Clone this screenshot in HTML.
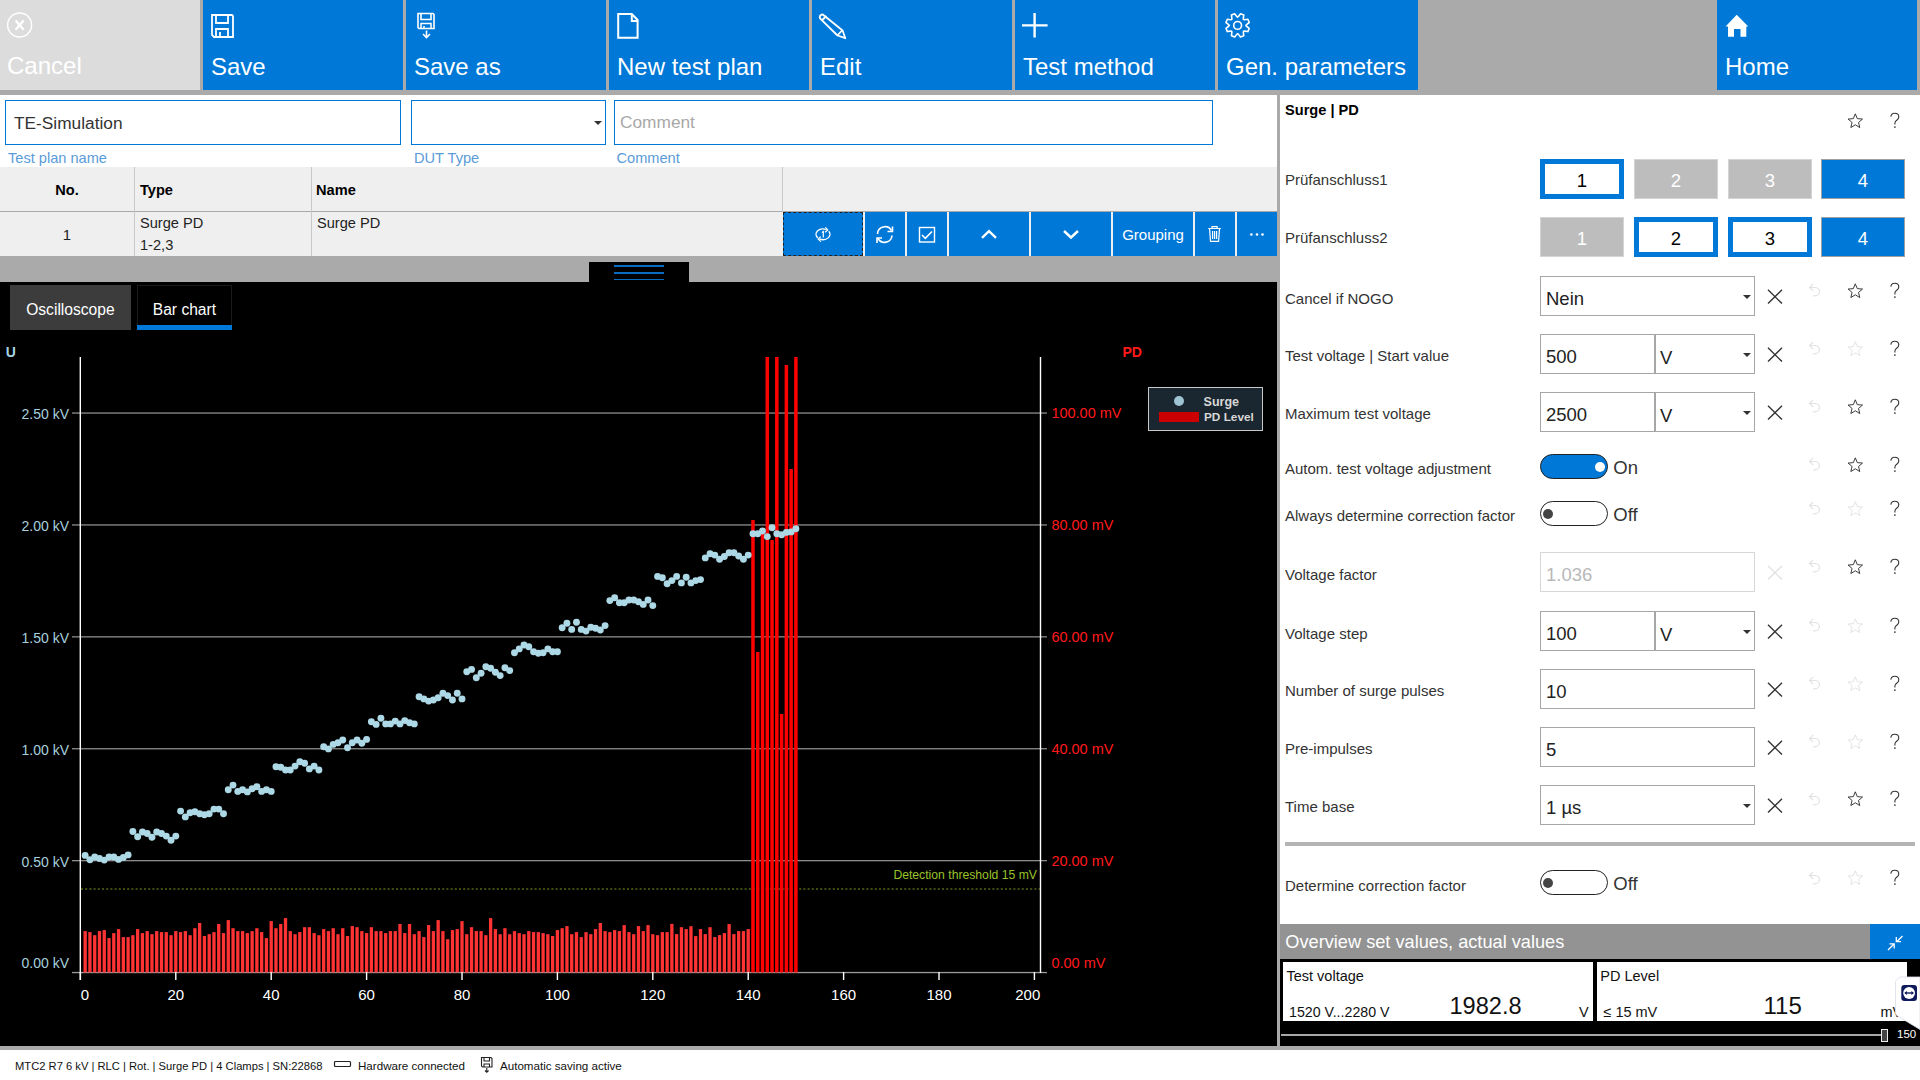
<!DOCTYPE html>
<html><head><meta charset="utf-8"><style>
html,body{margin:0;padding:0;width:1920px;height:1080px;overflow:hidden;background:#fff;font-family:"Liberation Sans",sans-serif;}
.a{position:absolute;}
.t{position:absolute;line-height:1;white-space:nowrap;}
svg text{font-family:"Liberation Sans",sans-serif;}
</style></head><body>
<div class="a" style="left:0px;top:0px;width:1920px;height:95px;background:#aaaaaa"></div>
<div class="a" style="left:0px;top:0px;width:200px;height:90px;background:#dcdcdc"></div>
<svg class="a" style="left:6px;top:12px;" width="28" height="28" viewBox="0 0 28 28"><circle cx="13.6" cy="13" r="12" fill="none" stroke="#fff" stroke-width="1.4"/><path d="M9.6 8.6 L17.6 17.8 M17.6 8.6 L9.6 17.8" stroke="#fff" stroke-width="2.3"/></svg>
<div class="t" style="left:7px;top:54.28px;font-size:24px;color:#fff;font-weight:normal;">Cancel</div>
<div class="a" style="left:203px;top:0px;width:200px;height:90px;background:#0078d7"></div>
<div class="t" style="left:211px;top:54.68px;font-size:24px;color:#fff;font-weight:normal;">Save</div>
<div class="a" style="left:406px;top:0px;width:200px;height:90px;background:#0078d7"></div>
<div class="t" style="left:414px;top:54.68px;font-size:24px;color:#fff;font-weight:normal;">Save as</div>
<div class="a" style="left:609px;top:0px;width:200px;height:90px;background:#0078d7"></div>
<div class="t" style="left:617px;top:54.68px;font-size:24px;color:#fff;font-weight:normal;">New test plan</div>
<div class="a" style="left:812px;top:0px;width:200px;height:90px;background:#0078d7"></div>
<div class="t" style="left:820px;top:54.68px;font-size:24px;color:#fff;font-weight:normal;">Edit</div>
<div class="a" style="left:1015px;top:0px;width:200px;height:90px;background:#0078d7"></div>
<div class="t" style="left:1023px;top:54.68px;font-size:24px;color:#fff;font-weight:normal;">Test method</div>
<div class="a" style="left:1218px;top:0px;width:200px;height:90px;background:#0078d7"></div>
<div class="t" style="left:1226px;top:54.68px;font-size:24px;color:#fff;font-weight:normal;">Gen. parameters</div>
<div class="a" style="left:1717px;top:0px;width:200px;height:90px;background:#0078d7"></div>
<div class="t" style="left:1725px;top:54.68px;font-size:24px;color:#fff;font-weight:normal;">Home</div>
<svg class="a" style="left:208px;top:10px;" width="30" height="30" viewBox="0 0 30 30"><path d="M4 5 H24 L25 6 V27 H6 L4 25 Z" fill="none" stroke="#fff" stroke-width="1.8"/><path d="M8 5 V13 H20 V5" fill="none" stroke="#fff" stroke-width="1.8"/><path d="M8 27 V19 H20 V27 M12 27 V22" fill="none" stroke="#fff" stroke-width="1.8"/></svg>
<svg class="a" style="left:412px;top:8px;" width="30" height="34" viewBox="0 0 30 34"><path d="M6 5.5 H21 L22 6.5 V20.5 H7 L6 19.5 Z" fill="none" stroke="#fff" stroke-width="1.6"/><path d="M9 5.5 V11.5 H19 V5.5" fill="none" stroke="#fff" stroke-width="1.6"/><path d="M9 20.5 V15.5 H19 V20.5 M12 20.5 V18" fill="none" stroke="#fff" stroke-width="1.5"/><path d="M14.5 22.5 V29 M11 26 L14.5 29.5 L18 26" fill="none" stroke="#fff" stroke-width="1.6"/></svg>
<svg class="a" style="left:612px;top:8px;" width="32" height="34" viewBox="0 0 32 34"><path d="M6.2 6 H19.8 L25.6 12 V29.8 H6.2 Z" fill="none" stroke="#fff" stroke-width="2"/><path d="M19.8 6 V13 H25.6" fill="none" stroke="#fff" stroke-width="2"/></svg>
<svg class="a" style="left:815px;top:7.5px;" width="36" height="36" viewBox="0 0 36 36"><path d="M9 7.5 C7 5.5 4 7 5 10.3 L22.5 27.5 L30.3 30.2 L27.6 22.5 Z" fill="none" stroke="#fff" stroke-width="1.8" stroke-linejoin="round"/><path d="M7.2 12 L11.5 8 M22.8 27 L27 22.5" fill="none" stroke="#fff" stroke-width="1.8"/></svg>
<svg class="a" style="left:1018px;top:8px;" width="34" height="34" viewBox="0 0 34 34"><path d="M4 17.4 H29.6 M16.6 5 V29.6" stroke="#fff" stroke-width="2.4"/></svg>
<svg class="a" style="left:1220px;top:8px;" width="36" height="36" viewBox="0 0 36 36"><path d="M18.46 8.44 L20.50 5.76 L23.78 7.11 L23.32 10.46 L23.47 11.53 L24.54 11.68 L27.89 11.22 L29.24 14.50 L26.56 16.54 L25.90 17.40 L26.56 18.26 L29.24 20.30 L27.89 23.58 L24.54 23.12 L23.47 23.27 L23.32 24.34 L23.78 27.69 L20.50 29.04 L18.46 26.36 L17.60 25.70 L16.74 26.36 L14.70 29.04 L11.42 27.69 L11.88 24.34 L11.73 23.27 L10.66 23.12 L7.31 23.58 L5.96 20.30 L8.64 18.26 L9.30 17.40 L8.64 16.54 L5.96 14.50 L7.31 11.22 L10.66 11.68 L11.73 11.53 L11.88 10.46 L11.42 7.11 L14.70 5.76 L16.74 8.44 L17.60 9.10 Z" fill="none" stroke="#fff" stroke-width="1.6" stroke-linejoin="round"/><circle cx="17.6" cy="17.4" r="3.9" fill="none" stroke="#fff" stroke-width="1.6"/></svg>
<svg class="a" style="left:1722px;top:10px;" width="32" height="32" viewBox="0 0 32 32"><path d="M3.6 16.5 L14.7 4.8 L26.3 16.5 L24.3 16.5 L24.3 26.8 L18.5 26.8 L18.5 19 L12 19 L12 26.8 L6 26.8 L6 16.5 Z" fill="#fff"/></svg>
<div class="a" style="left:0px;top:95px;width:1277px;height:72px;background:#fff"></div>
<div class="a" style="left:5px;top:100px;width:396px;height:45px;border:1px solid #0078d7;box-sizing:border-box;background:#fff"></div>
<div class="t" style="left:14px;top:115.35px;font-size:17.3px;color:#333;font-weight:normal;">TE-Simulation</div>
<div class="t" style="left:8px;top:150.64px;font-size:14.6px;color:#5a9bd8;font-weight:normal;">Test plan name</div>
<div class="a" style="left:411px;top:100px;width:195px;height:45px;border:1px solid #0078d7;box-sizing:border-box;background:#fff"></div>
<svg class="a" style="left:592px;top:119px;" width="12" height="8" viewBox="0 0 12 8"><path d="M2 2 H10 L6 6 Z" fill="#333"/></svg>
<div class="t" style="left:414px;top:150.64px;font-size:14.6px;color:#5a9bd8;font-weight:normal;">DUT Type</div>
<div class="a" style="left:614px;top:100px;width:599px;height:45px;border:1px solid #0078d7;box-sizing:border-box;background:#fff"></div>
<div class="t" style="left:620px;top:113.55px;font-size:17.3px;color:#a8a8a8;font-weight:normal;">Comment</div>
<div class="t" style="left:616.5px;top:150.64px;font-size:14.6px;color:#5a9bd8;font-weight:normal;">Comment</div>
<div class="a" style="left:0px;top:167px;width:1277px;height:89px;background:#efefef"></div>
<div class="a" style="left:0px;top:211px;width:1277px;height:1px;background:#a8a8a8"></div>
<div class="a" style="left:134px;top:167px;width:1px;height:89px;background:#c8c8c8"></div>
<div class="a" style="left:311px;top:167px;width:1px;height:89px;background:#c8c8c8"></div>
<div class="a" style="left:782px;top:167px;width:1px;height:45px;background:#c8c8c8"></div>
<div class="t" style="left:-233px;width:600px;text-align:center;top:182.64px;font-size:14.6px;color:#000;font-weight:bold;">No.</div>
<div class="t" style="left:140px;top:182.64px;font-size:14.6px;color:#000;font-weight:bold;">Type</div>
<div class="t" style="left:316px;top:182.64px;font-size:14.6px;color:#000;font-weight:bold;">Name</div>
<div class="t" style="left:-233px;width:600px;text-align:center;top:227.30px;font-size:15px;color:#222;font-weight:normal;">1</div>
<div class="t" style="left:140px;top:215.94px;font-size:14.6px;color:#222;font-weight:normal;">Surge PD</div>
<div class="t" style="left:140px;top:237.64px;font-size:14.6px;color:#222;font-weight:normal;">1-2,3</div>
<div class="t" style="left:317px;top:215.94px;font-size:14.6px;color:#222;font-weight:normal;">Surge PD</div>
<div class="a" style="left:783px;top:212px;width:80px;height:44px;background:#0078d7"></div>
<div class="a" style="left:865px;top:212px;width:40px;height:44px;background:#0078d7"></div>
<div class="a" style="left:907px;top:212px;width:40px;height:44px;background:#0078d7"></div>
<div class="a" style="left:949px;top:212px;width:80px;height:44px;background:#0078d7"></div>
<div class="a" style="left:1031px;top:212px;width:80px;height:44px;background:#0078d7"></div>
<div class="a" style="left:1113px;top:212px;width:80px;height:44px;background:#0078d7"></div>
<div class="a" style="left:1195px;top:212px;width:40px;height:44px;background:#0078d7"></div>
<div class="a" style="left:1237px;top:212px;width:40px;height:44px;background:#0078d7"></div>
<div class="a" style="left:783px;top:212px;width:80px;height:44px;border:1px dashed #222;box-sizing:border-box"></div>
<svg class="a" style="left:808px;top:222px;" width="30" height="26" viewBox="0 0 30 26"><path d="M10.05 16.05 A7 5.3 0 0 1 18.5 7.7 M20.73 9.26 A7 5.3 0 0 1 11.5 16.89" fill="none" stroke="#fff" stroke-width="1.25"/><path d="M17.4 5.3 L19.7 7.9 L17.1 10.3 M12.6 14.6 L10.3 17.1 L12.9 19.6" fill="none" stroke="#fff" stroke-width="1.25"/><path d="M13.9 10.6 L15.3 9.6 V15.6" fill="none" stroke="#fff" stroke-width="1.2"/></svg>
<svg class="a" style="left:870px;top:222px;" width="30" height="26" viewBox="0 0 30 26"><path d="M7.5 12 A7.5 7.5 0 0 1 21.5 8.5 M22 13.5 A7.5 7.5 0 0 1 8 16.5" fill="none" stroke="#fff" stroke-width="1.6"/><path d="M22.5 4.5 V9.5 H17.5 M7 21 V16 H12" fill="none" stroke="#fff" stroke-width="1.6"/></svg>
<svg class="a" style="left:912px;top:222px;" width="30" height="26" viewBox="0 0 30 26"><rect x="7.5" y="5.5" width="15" height="14.5" fill="none" stroke="#fff" stroke-width="1.4"/><path d="M10 13 L13.3 16.3 L20 9.5" fill="none" stroke="#fff" stroke-width="1.6"/></svg>
<svg class="a" style="left:974px;top:222px;" width="30" height="26" viewBox="0 0 30 26"><path d="M8 15.8 L15 9.2 L22 15.8" fill="none" stroke="#fff" stroke-width="2.4"/></svg>
<svg class="a" style="left:1056px;top:222px;" width="30" height="26" viewBox="0 0 30 26"><path d="M8 9 L15 15.5 L22 9" fill="none" stroke="#fff" stroke-width="2.4"/></svg>
<div class="t" style="left:853px;width:600px;text-align:center;top:227.30px;font-size:15px;color:#fff;font-weight:normal;">Grouping</div>
<svg class="a" style="left:1200px;top:222px;" width="30" height="26" viewBox="0 0 30 26"><path d="M8.3 6.5 H20.9 M12 6.5 V4.6 H17.2 V6.5 M9.6 6.6 L10.5 19.3 H18.6 L19.5 6.6 M12.6 9 V17 M14.6 9 V17 M16.6 9 V17" fill="none" stroke="#fff" stroke-width="1.2"/></svg>
<svg class="a" style="left:1240px;top:222px;" width="30" height="26" viewBox="0 0 30 26"><circle cx="11.4" cy="12.5" r="1.3" fill="#fff"/><circle cx="17" cy="12.5" r="1.3" fill="#fff"/><circle cx="22.5" cy="12.5" r="1.3" fill="#fff"/></svg>
<div class="a" style="left:0px;top:256px;width:1277px;height:26px;background:#aaaaaa"></div>
<div class="a" style="left:589px;top:262px;width:100px;height:20px;background:#000"></div>
<div class="a" style="left:614px;top:265px;width:50px;height:1.5px;background:#0a6cc0"></div>
<div class="a" style="left:614px;top:272px;width:50px;height:1.5px;background:#0a6cc0"></div>
<div class="a" style="left:614px;top:278.5px;width:50px;height:1.5px;background:#0a6cc0"></div>
<div class="a" style="left:1277px;top:95px;width:3px;height:955px;background:#aaaaaa"></div>
<div class="a" style="left:0px;top:1046px;width:1920px;height:4px;background:#aaaaaa"></div>
<div class="a" style="left:0px;top:1050px;width:1920px;height:30px;background:#fff"></div>
<div class="t" style="left:15px;top:1060.52px;font-size:11.2px;color:#111;font-weight:normal;">MTC2 R7 6 kV | RLC | Rot. | Surge PD | 4 Clamps | SN:22868</div>
<svg class="a" style="left:333px;top:1059px;" width="20" height="12" viewBox="0 0 20 12"><rect x="1.5" y="2.5" width="16" height="5" rx="1" fill="none" stroke="#222" stroke-width="1.2"/></svg>
<div class="t" style="left:358px;top:1060.18px;font-size:11.6px;color:#111;font-weight:normal;">Hardware connected</div>
<svg class="a" style="left:479px;top:1055px;" width="16" height="20" viewBox="0 0 16 20"><path d="M2.5 2.5 H12 L13 3.5 V12 H3.5 L2.5 11 Z" fill="none" stroke="#222" stroke-width="1.1"/><path d="M5 2.5 V6 H10.5 V2.5 M5 12 V9 H10.5 V12 M7.8 13 V17 M6 15.5 L7.8 17.3 L9.6 15.5" fill="none" stroke="#222" stroke-width="1.1"/></svg>
<div class="t" style="left:500px;top:1060.18px;font-size:11.6px;color:#111;font-weight:normal;">Automatic saving active</div>
<div class="a" style="left:1280px;top:95px;width:640px;height:829px;background:#fff"></div>
<div class="t" style="left:1285px;top:103.14px;font-size:14.6px;color:#000;font-weight:bold;">Surge | PD</div>
<svg class="a" style="left:1848px;top:112.5px;" width="16" height="17" viewBox="0 0 16 17"><path d="M7.30 0.80 L9.30 5.65 L14.53 6.05 L10.53 9.45 L11.77 14.55 L7.30 11.80 L2.83 14.55 L4.07 9.45 L0.07 6.05 L5.30 5.65 Z" fill="none" stroke="#333" stroke-width="0.95" stroke-linejoin="miter"/></svg>
<svg class="a" style="left:1888.5px;top:112px;" width="12" height="17" viewBox="0 0 12 17"><path d="M1.8 4.6 C2.1 2.3 3.8 1.2 5.6 1.2 C7.9 1.2 9.8 2.7 9.8 4.9 C9.8 7.2 7.8 8.1 6.7 9.1 C6.1 9.7 5.9 10.3 5.9 11.4 V12.6" fill="none" stroke="#333" stroke-width="1.1"/><circle cx="5.9" cy="15.1" r="0.85" fill="#333"/></svg>
<div class="t" style="left:1285px;top:171.80px;font-size:15px;color:#333;font-weight:normal;">Prüfanschluss1</div>
<div class="t" style="left:1285px;top:230.10px;font-size:15px;color:#333;font-weight:normal;">Prüfanschluss2</div>
<div class="a" style="left:1540px;top:159px;width:84px;height:40px;background:#fff;border:5px solid #0078d7;box-sizing:border-box"></div>
<div class="t" style="left:1282.0px;width:600px;text-align:center;top:172.04px;font-size:18.5px;color:#000;font-weight:normal;">1</div>
<div class="a" style="left:1634px;top:159px;width:84px;height:40px;background:#bdbdbd;border:1px solid #d4d4d4;box-sizing:border-box"></div>
<div class="t" style="left:1376.0px;width:600px;text-align:center;top:172.04px;font-size:18.5px;color:#fff;font-weight:normal;">2</div>
<div class="a" style="left:1728px;top:159px;width:84px;height:40px;background:#bdbdbd;border:1px solid #d4d4d4;box-sizing:border-box"></div>
<div class="t" style="left:1470.0px;width:600px;text-align:center;top:172.04px;font-size:18.5px;color:#fff;font-weight:normal;">3</div>
<div class="a" style="left:1821px;top:159px;width:84px;height:40px;background:#0078d7;border:1px solid #a0a0a0;box-sizing:border-box"></div>
<div class="t" style="left:1563.0px;width:600px;text-align:center;top:172.04px;font-size:18.5px;color:#fff;font-weight:normal;">4</div>
<div class="a" style="left:1540px;top:217px;width:84px;height:40px;background:#bdbdbd;border:1px solid #d4d4d4;box-sizing:border-box"></div>
<div class="t" style="left:1282.0px;width:600px;text-align:center;top:230.04px;font-size:18.5px;color:#fff;font-weight:normal;">1</div>
<div class="a" style="left:1634px;top:217px;width:84px;height:40px;background:#fff;border:5px solid #0078d7;box-sizing:border-box"></div>
<div class="t" style="left:1376.0px;width:600px;text-align:center;top:230.04px;font-size:18.5px;color:#000;font-weight:normal;">2</div>
<div class="a" style="left:1728px;top:217px;width:84px;height:40px;background:#fff;border:5px solid #0078d7;box-sizing:border-box"></div>
<div class="t" style="left:1470.0px;width:600px;text-align:center;top:230.04px;font-size:18.5px;color:#000;font-weight:normal;">3</div>
<div class="a" style="left:1821px;top:217px;width:84px;height:40px;background:#0078d7;border:1px solid #a0a0a0;box-sizing:border-box"></div>
<div class="t" style="left:1563.0px;width:600px;text-align:center;top:230.04px;font-size:18.5px;color:#fff;font-weight:normal;">4</div>
<div class="t" style="left:1285px;top:290.60px;font-size:15px;color:#333;font-weight:normal;">Cancel if NOGO</div>
<div class="a" style="left:1540px;top:276px;width:215px;height:40px;background:#fff;border:1px solid #a6a6a6;box-sizing:border-box"></div>
<div class="t" style="left:1546px;top:289.84px;font-size:18.5px;color:#222;font-weight:normal;">Nein</div>
<svg class="a" style="left:1742px;top:294px;" width="10" height="6" viewBox="0 0 10 6"><path d="M1 1 H9 L5 5 Z" fill="#333"/></svg>
<svg class="a" style="left:1767px;top:289px;" width="16" height="16" viewBox="0 0 16 16"><path d="M1 0.8 L15 14.6 M15 0.8 L1 14.6" stroke="#333" stroke-width="1.4"/></svg>
<svg class="a" style="left:1808px;top:282.3px;" width="14" height="15" viewBox="0 0 14 15"><path d="M1.8 5.5 H6.8 A4.6 4.2 0 0 1 6.8 13.9 H5.2" fill="none" stroke="#e2e2e2" stroke-width="1.2"/><path d="M5.2 1.9 L1.6 5.5 L5.2 9.1" fill="none" stroke="#e2e2e2" stroke-width="1.2"/></svg>
<svg class="a" style="left:1847.5px;top:282.8px;" width="16" height="17" viewBox="0 0 16 17"><path d="M7.30 0.80 L9.30 5.65 L14.53 6.05 L10.53 9.45 L11.77 14.55 L7.30 11.80 L2.83 14.55 L4.07 9.45 L0.07 6.05 L5.30 5.65 Z" fill="none" stroke="#333" stroke-width="0.95" stroke-linejoin="miter"/></svg>
<svg class="a" style="left:1888.5px;top:282.0px;" width="12" height="17" viewBox="0 0 12 17"><path d="M1.8 4.6 C2.1 2.3 3.8 1.2 5.6 1.2 C7.9 1.2 9.8 2.7 9.8 4.9 C9.8 7.2 7.8 8.1 6.7 9.1 C6.1 9.7 5.9 10.3 5.9 11.4 V12.6" fill="none" stroke="#333" stroke-width="1.1"/><circle cx="5.9" cy="15.1" r="0.85" fill="#333"/></svg>
<div class="t" style="left:1285px;top:348.30px;font-size:15px;color:#333;font-weight:normal;">Test voltage | Start value</div>
<div class="a" style="left:1540px;top:334px;width:215px;height:40px;background:#fff;border:1px solid #a6a6a6;box-sizing:border-box"></div>
<div class="t" style="left:1546px;top:347.84px;font-size:18.5px;color:#222;font-weight:normal;">500</div>
<div class="a" style="left:1654px;top:334px;width:2px;height:40px;background:#a6a6a6"></div>
<div class="t" style="left:1660px;top:349.34px;font-size:18.5px;color:#222;font-weight:normal;">V</div>
<svg class="a" style="left:1742px;top:352px;" width="10" height="6" viewBox="0 0 10 6"><path d="M1 1 H9 L5 5 Z" fill="#333"/></svg>
<svg class="a" style="left:1767px;top:347px;" width="16" height="16" viewBox="0 0 16 16"><path d="M1 0.8 L15 14.6 M15 0.8 L1 14.6" stroke="#333" stroke-width="1.4"/></svg>
<svg class="a" style="left:1808px;top:340px;" width="14" height="15" viewBox="0 0 14 15"><path d="M1.8 5.5 H6.8 A4.6 4.2 0 0 1 6.8 13.9 H5.2" fill="none" stroke="#e2e2e2" stroke-width="1.2"/><path d="M5.2 1.9 L1.6 5.5 L5.2 9.1" fill="none" stroke="#e2e2e2" stroke-width="1.2"/></svg>
<svg class="a" style="left:1847.5px;top:340.5px;" width="16" height="17" viewBox="0 0 16 17"><path d="M7.30 0.80 L9.30 5.65 L14.53 6.05 L10.53 9.45 L11.77 14.55 L7.30 11.80 L2.83 14.55 L4.07 9.45 L0.07 6.05 L5.30 5.65 Z" fill="none" stroke="#e2e2e2" stroke-width="0.95" stroke-linejoin="miter"/></svg>
<svg class="a" style="left:1888.5px;top:339.7px;" width="12" height="17" viewBox="0 0 12 17"><path d="M1.8 4.6 C2.1 2.3 3.8 1.2 5.6 1.2 C7.9 1.2 9.8 2.7 9.8 4.9 C9.8 7.2 7.8 8.1 6.7 9.1 C6.1 9.7 5.9 10.3 5.9 11.4 V12.6" fill="none" stroke="#333" stroke-width="1.1"/><circle cx="5.9" cy="15.1" r="0.85" fill="#333"/></svg>
<div class="t" style="left:1285px;top:406.30px;font-size:15px;color:#333;font-weight:normal;">Maximum test voltage</div>
<div class="a" style="left:1540px;top:392px;width:215px;height:40px;background:#fff;border:1px solid #a6a6a6;box-sizing:border-box"></div>
<div class="t" style="left:1546px;top:405.84px;font-size:18.5px;color:#222;font-weight:normal;">2500</div>
<div class="a" style="left:1654px;top:392px;width:2px;height:40px;background:#a6a6a6"></div>
<div class="t" style="left:1660px;top:407.34px;font-size:18.5px;color:#222;font-weight:normal;">V</div>
<svg class="a" style="left:1742px;top:410px;" width="10" height="6" viewBox="0 0 10 6"><path d="M1 1 H9 L5 5 Z" fill="#333"/></svg>
<svg class="a" style="left:1767px;top:405px;" width="16" height="16" viewBox="0 0 16 16"><path d="M1 0.8 L15 14.6 M15 0.8 L1 14.6" stroke="#333" stroke-width="1.4"/></svg>
<svg class="a" style="left:1808px;top:398px;" width="14" height="15" viewBox="0 0 14 15"><path d="M1.8 5.5 H6.8 A4.6 4.2 0 0 1 6.8 13.9 H5.2" fill="none" stroke="#e2e2e2" stroke-width="1.2"/><path d="M5.2 1.9 L1.6 5.5 L5.2 9.1" fill="none" stroke="#e2e2e2" stroke-width="1.2"/></svg>
<svg class="a" style="left:1847.5px;top:398.5px;" width="16" height="17" viewBox="0 0 16 17"><path d="M7.30 0.80 L9.30 5.65 L14.53 6.05 L10.53 9.45 L11.77 14.55 L7.30 11.80 L2.83 14.55 L4.07 9.45 L0.07 6.05 L5.30 5.65 Z" fill="none" stroke="#333" stroke-width="0.95" stroke-linejoin="miter"/></svg>
<svg class="a" style="left:1888.5px;top:397.7px;" width="12" height="17" viewBox="0 0 12 17"><path d="M1.8 4.6 C2.1 2.3 3.8 1.2 5.6 1.2 C7.9 1.2 9.8 2.7 9.8 4.9 C9.8 7.2 7.8 8.1 6.7 9.1 C6.1 9.7 5.9 10.3 5.9 11.4 V12.6" fill="none" stroke="#333" stroke-width="1.1"/><circle cx="5.9" cy="15.1" r="0.85" fill="#333"/></svg>
<div class="t" style="left:1285px;top:461.30px;font-size:15px;color:#333;font-weight:normal;">Autom. test voltage adjustment</div>
<div class="a" style="left:1540px;top:454px;width:68px;height:25px;background:#0078d7;border:1.5px solid #222;border-radius:13px;box-sizing:border-box"></div>
<div class="a" style="left:1595px;top:461.5px;width:10px;height:10px;background:#fff;border-radius:50%"></div>
<div class="t" style="left:1613.3px;top:458.84px;font-size:18.5px;color:#333;font-weight:normal;">On</div>
<svg class="a" style="left:1808px;top:456px;" width="14" height="15" viewBox="0 0 14 15"><path d="M1.8 5.5 H6.8 A4.6 4.2 0 0 1 6.8 13.9 H5.2" fill="none" stroke="#e2e2e2" stroke-width="1.2"/><path d="M5.2 1.9 L1.6 5.5 L5.2 9.1" fill="none" stroke="#e2e2e2" stroke-width="1.2"/></svg>
<svg class="a" style="left:1847.5px;top:456.5px;" width="16" height="17" viewBox="0 0 16 17"><path d="M7.30 0.80 L9.30 5.65 L14.53 6.05 L10.53 9.45 L11.77 14.55 L7.30 11.80 L2.83 14.55 L4.07 9.45 L0.07 6.05 L5.30 5.65 Z" fill="none" stroke="#333" stroke-width="0.95" stroke-linejoin="miter"/></svg>
<svg class="a" style="left:1888.5px;top:455.7px;" width="12" height="17" viewBox="0 0 12 17"><path d="M1.8 4.6 C2.1 2.3 3.8 1.2 5.6 1.2 C7.9 1.2 9.8 2.7 9.8 4.9 C9.8 7.2 7.8 8.1 6.7 9.1 C6.1 9.7 5.9 10.3 5.9 11.4 V12.6" fill="none" stroke="#333" stroke-width="1.1"/><circle cx="5.9" cy="15.1" r="0.85" fill="#333"/></svg>
<div class="t" style="left:1285px;top:508.30px;font-size:15px;color:#333;font-weight:normal;">Always determine correction factor</div>
<div class="a" style="left:1540px;top:501px;width:68px;height:25px;background:#fff;border:1.5px solid #222;border-radius:13px;box-sizing:border-box"></div>
<div class="a" style="left:1543px;top:508.5px;width:10px;height:10px;background:#444;border-radius:50%"></div>
<div class="t" style="left:1613.3px;top:505.84px;font-size:18.5px;color:#333;font-weight:normal;">Off</div>
<svg class="a" style="left:1808px;top:500px;" width="14" height="15" viewBox="0 0 14 15"><path d="M1.8 5.5 H6.8 A4.6 4.2 0 0 1 6.8 13.9 H5.2" fill="none" stroke="#e2e2e2" stroke-width="1.2"/><path d="M5.2 1.9 L1.6 5.5 L5.2 9.1" fill="none" stroke="#e2e2e2" stroke-width="1.2"/></svg>
<svg class="a" style="left:1847.5px;top:500.5px;" width="16" height="17" viewBox="0 0 16 17"><path d="M7.30 0.80 L9.30 5.65 L14.53 6.05 L10.53 9.45 L11.77 14.55 L7.30 11.80 L2.83 14.55 L4.07 9.45 L0.07 6.05 L5.30 5.65 Z" fill="none" stroke="#e2e2e2" stroke-width="0.95" stroke-linejoin="miter"/></svg>
<svg class="a" style="left:1888.5px;top:499.70000000000005px;" width="12" height="17" viewBox="0 0 12 17"><path d="M1.8 4.6 C2.1 2.3 3.8 1.2 5.6 1.2 C7.9 1.2 9.8 2.7 9.8 4.9 C9.8 7.2 7.8 8.1 6.7 9.1 C6.1 9.7 5.9 10.3 5.9 11.4 V12.6" fill="none" stroke="#333" stroke-width="1.1"/><circle cx="5.9" cy="15.1" r="0.85" fill="#333"/></svg>
<div class="t" style="left:1285px;top:566.60px;font-size:15px;color:#333;font-weight:normal;">Voltage factor</div>
<div class="a" style="left:1540px;top:552px;width:215px;height:40px;background:#fff;border:1px solid #d6d6d6;box-sizing:border-box"></div>
<div class="t" style="left:1546px;top:565.84px;font-size:18.5px;color:#b8b8b8;font-weight:normal;">1.036</div>
<svg class="a" style="left:1767px;top:565px;" width="16" height="16" viewBox="0 0 16 16"><path d="M1 0.8 L15 14.6 M15 0.8 L1 14.6" stroke="#e2e2e2" stroke-width="1.4"/></svg>
<svg class="a" style="left:1808px;top:558.3px;" width="14" height="15" viewBox="0 0 14 15"><path d="M1.8 5.5 H6.8 A4.6 4.2 0 0 1 6.8 13.9 H5.2" fill="none" stroke="#e2e2e2" stroke-width="1.2"/><path d="M5.2 1.9 L1.6 5.5 L5.2 9.1" fill="none" stroke="#e2e2e2" stroke-width="1.2"/></svg>
<svg class="a" style="left:1847.5px;top:558.8px;" width="16" height="17" viewBox="0 0 16 17"><path d="M7.30 0.80 L9.30 5.65 L14.53 6.05 L10.53 9.45 L11.77 14.55 L7.30 11.80 L2.83 14.55 L4.07 9.45 L0.07 6.05 L5.30 5.65 Z" fill="none" stroke="#333" stroke-width="0.95" stroke-linejoin="miter"/></svg>
<svg class="a" style="left:1888.5px;top:558.0px;" width="12" height="17" viewBox="0 0 12 17"><path d="M1.8 4.6 C2.1 2.3 3.8 1.2 5.6 1.2 C7.9 1.2 9.8 2.7 9.8 4.9 C9.8 7.2 7.8 8.1 6.7 9.1 C6.1 9.7 5.9 10.3 5.9 11.4 V12.6" fill="none" stroke="#333" stroke-width="1.1"/><circle cx="5.9" cy="15.1" r="0.85" fill="#333"/></svg>
<div class="t" style="left:1285px;top:625.60px;font-size:15px;color:#333;font-weight:normal;">Voltage step</div>
<div class="a" style="left:1540px;top:611px;width:215px;height:40px;background:#fff;border:1px solid #a6a6a6;box-sizing:border-box"></div>
<div class="t" style="left:1546px;top:624.84px;font-size:18.5px;color:#222;font-weight:normal;">100</div>
<div class="a" style="left:1654px;top:611px;width:2px;height:40px;background:#a6a6a6"></div>
<div class="t" style="left:1660px;top:626.34px;font-size:18.5px;color:#222;font-weight:normal;">V</div>
<svg class="a" style="left:1742px;top:629px;" width="10" height="6" viewBox="0 0 10 6"><path d="M1 1 H9 L5 5 Z" fill="#333"/></svg>
<svg class="a" style="left:1767px;top:624px;" width="16" height="16" viewBox="0 0 16 16"><path d="M1 0.8 L15 14.6 M15 0.8 L1 14.6" stroke="#333" stroke-width="1.4"/></svg>
<svg class="a" style="left:1808px;top:617.3px;" width="14" height="15" viewBox="0 0 14 15"><path d="M1.8 5.5 H6.8 A4.6 4.2 0 0 1 6.8 13.9 H5.2" fill="none" stroke="#e2e2e2" stroke-width="1.2"/><path d="M5.2 1.9 L1.6 5.5 L5.2 9.1" fill="none" stroke="#e2e2e2" stroke-width="1.2"/></svg>
<svg class="a" style="left:1847.5px;top:617.8px;" width="16" height="17" viewBox="0 0 16 17"><path d="M7.30 0.80 L9.30 5.65 L14.53 6.05 L10.53 9.45 L11.77 14.55 L7.30 11.80 L2.83 14.55 L4.07 9.45 L0.07 6.05 L5.30 5.65 Z" fill="none" stroke="#e2e2e2" stroke-width="0.95" stroke-linejoin="miter"/></svg>
<svg class="a" style="left:1888.5px;top:617.0px;" width="12" height="17" viewBox="0 0 12 17"><path d="M1.8 4.6 C2.1 2.3 3.8 1.2 5.6 1.2 C7.9 1.2 9.8 2.7 9.8 4.9 C9.8 7.2 7.8 8.1 6.7 9.1 C6.1 9.7 5.9 10.3 5.9 11.4 V12.6" fill="none" stroke="#333" stroke-width="1.1"/><circle cx="5.9" cy="15.1" r="0.85" fill="#333"/></svg>
<div class="t" style="left:1285px;top:683.30px;font-size:15px;color:#333;font-weight:normal;">Number of surge pulses</div>
<div class="a" style="left:1540px;top:669px;width:215px;height:40px;background:#fff;border:1px solid #a6a6a6;box-sizing:border-box"></div>
<div class="t" style="left:1546px;top:682.84px;font-size:18.5px;color:#222;font-weight:normal;">10</div>
<svg class="a" style="left:1767px;top:682px;" width="16" height="16" viewBox="0 0 16 16"><path d="M1 0.8 L15 14.6 M15 0.8 L1 14.6" stroke="#333" stroke-width="1.4"/></svg>
<svg class="a" style="left:1808px;top:675px;" width="14" height="15" viewBox="0 0 14 15"><path d="M1.8 5.5 H6.8 A4.6 4.2 0 0 1 6.8 13.9 H5.2" fill="none" stroke="#e2e2e2" stroke-width="1.2"/><path d="M5.2 1.9 L1.6 5.5 L5.2 9.1" fill="none" stroke="#e2e2e2" stroke-width="1.2"/></svg>
<svg class="a" style="left:1847.5px;top:675.5px;" width="16" height="17" viewBox="0 0 16 17"><path d="M7.30 0.80 L9.30 5.65 L14.53 6.05 L10.53 9.45 L11.77 14.55 L7.30 11.80 L2.83 14.55 L4.07 9.45 L0.07 6.05 L5.30 5.65 Z" fill="none" stroke="#e2e2e2" stroke-width="0.95" stroke-linejoin="miter"/></svg>
<svg class="a" style="left:1888.5px;top:674.7px;" width="12" height="17" viewBox="0 0 12 17"><path d="M1.8 4.6 C2.1 2.3 3.8 1.2 5.6 1.2 C7.9 1.2 9.8 2.7 9.8 4.9 C9.8 7.2 7.8 8.1 6.7 9.1 C6.1 9.7 5.9 10.3 5.9 11.4 V12.6" fill="none" stroke="#333" stroke-width="1.1"/><circle cx="5.9" cy="15.1" r="0.85" fill="#333"/></svg>
<div class="t" style="left:1285px;top:741.30px;font-size:15px;color:#333;font-weight:normal;">Pre-impulses</div>
<div class="a" style="left:1540px;top:727px;width:215px;height:40px;background:#fff;border:1px solid #a6a6a6;box-sizing:border-box"></div>
<div class="t" style="left:1546px;top:740.84px;font-size:18.5px;color:#222;font-weight:normal;">5</div>
<svg class="a" style="left:1767px;top:740px;" width="16" height="16" viewBox="0 0 16 16"><path d="M1 0.8 L15 14.6 M15 0.8 L1 14.6" stroke="#333" stroke-width="1.4"/></svg>
<svg class="a" style="left:1808px;top:733px;" width="14" height="15" viewBox="0 0 14 15"><path d="M1.8 5.5 H6.8 A4.6 4.2 0 0 1 6.8 13.9 H5.2" fill="none" stroke="#e2e2e2" stroke-width="1.2"/><path d="M5.2 1.9 L1.6 5.5 L5.2 9.1" fill="none" stroke="#e2e2e2" stroke-width="1.2"/></svg>
<svg class="a" style="left:1847.5px;top:733.5px;" width="16" height="17" viewBox="0 0 16 17"><path d="M7.30 0.80 L9.30 5.65 L14.53 6.05 L10.53 9.45 L11.77 14.55 L7.30 11.80 L2.83 14.55 L4.07 9.45 L0.07 6.05 L5.30 5.65 Z" fill="none" stroke="#e2e2e2" stroke-width="0.95" stroke-linejoin="miter"/></svg>
<svg class="a" style="left:1888.5px;top:732.7px;" width="12" height="17" viewBox="0 0 12 17"><path d="M1.8 4.6 C2.1 2.3 3.8 1.2 5.6 1.2 C7.9 1.2 9.8 2.7 9.8 4.9 C9.8 7.2 7.8 8.1 6.7 9.1 C6.1 9.7 5.9 10.3 5.9 11.4 V12.6" fill="none" stroke="#333" stroke-width="1.1"/><circle cx="5.9" cy="15.1" r="0.85" fill="#333"/></svg>
<div class="t" style="left:1285px;top:799.00px;font-size:15px;color:#333;font-weight:normal;">Time base</div>
<div class="a" style="left:1540px;top:785px;width:215px;height:40px;background:#fff;border:1px solid #a6a6a6;box-sizing:border-box"></div>
<div class="t" style="left:1546px;top:798.84px;font-size:18.5px;color:#222;font-weight:normal;">1 µs</div>
<svg class="a" style="left:1742px;top:803px;" width="10" height="6" viewBox="0 0 10 6"><path d="M1 1 H9 L5 5 Z" fill="#333"/></svg>
<svg class="a" style="left:1767px;top:798px;" width="16" height="16" viewBox="0 0 16 16"><path d="M1 0.8 L15 14.6 M15 0.8 L1 14.6" stroke="#333" stroke-width="1.4"/></svg>
<svg class="a" style="left:1808px;top:790.7px;" width="14" height="15" viewBox="0 0 14 15"><path d="M1.8 5.5 H6.8 A4.6 4.2 0 0 1 6.8 13.9 H5.2" fill="none" stroke="#e2e2e2" stroke-width="1.2"/><path d="M5.2 1.9 L1.6 5.5 L5.2 9.1" fill="none" stroke="#e2e2e2" stroke-width="1.2"/></svg>
<svg class="a" style="left:1847.5px;top:791.2px;" width="16" height="17" viewBox="0 0 16 17"><path d="M7.30 0.80 L9.30 5.65 L14.53 6.05 L10.53 9.45 L11.77 14.55 L7.30 11.80 L2.83 14.55 L4.07 9.45 L0.07 6.05 L5.30 5.65 Z" fill="none" stroke="#333" stroke-width="0.95" stroke-linejoin="miter"/></svg>
<svg class="a" style="left:1888.5px;top:790.4000000000001px;" width="12" height="17" viewBox="0 0 12 17"><path d="M1.8 4.6 C2.1 2.3 3.8 1.2 5.6 1.2 C7.9 1.2 9.8 2.7 9.8 4.9 C9.8 7.2 7.8 8.1 6.7 9.1 C6.1 9.7 5.9 10.3 5.9 11.4 V12.6" fill="none" stroke="#333" stroke-width="1.1"/><circle cx="5.9" cy="15.1" r="0.85" fill="#333"/></svg>
<div class="t" style="left:1285px;top:878.00px;font-size:15px;color:#333;font-weight:normal;">Determine correction factor</div>
<div class="a" style="left:1540px;top:870px;width:68px;height:25px;background:#fff;border:1.5px solid #222;border-radius:13px;box-sizing:border-box"></div>
<div class="a" style="left:1543px;top:877.5px;width:10px;height:10px;background:#444;border-radius:50%"></div>
<div class="t" style="left:1613.3px;top:874.84px;font-size:18.5px;color:#333;font-weight:normal;">Off</div>
<svg class="a" style="left:1808px;top:869.7px;" width="14" height="15" viewBox="0 0 14 15"><path d="M1.8 5.5 H6.8 A4.6 4.2 0 0 1 6.8 13.9 H5.2" fill="none" stroke="#e2e2e2" stroke-width="1.2"/><path d="M5.2 1.9 L1.6 5.5 L5.2 9.1" fill="none" stroke="#e2e2e2" stroke-width="1.2"/></svg>
<svg class="a" style="left:1847.5px;top:870.2px;" width="16" height="17" viewBox="0 0 16 17"><path d="M7.30 0.80 L9.30 5.65 L14.53 6.05 L10.53 9.45 L11.77 14.55 L7.30 11.80 L2.83 14.55 L4.07 9.45 L0.07 6.05 L5.30 5.65 Z" fill="none" stroke="#e2e2e2" stroke-width="0.95" stroke-linejoin="miter"/></svg>
<svg class="a" style="left:1888.5px;top:869.4000000000001px;" width="12" height="17" viewBox="0 0 12 17"><path d="M1.8 4.6 C2.1 2.3 3.8 1.2 5.6 1.2 C7.9 1.2 9.8 2.7 9.8 4.9 C9.8 7.2 7.8 8.1 6.7 9.1 C6.1 9.7 5.9 10.3 5.9 11.4 V12.6" fill="none" stroke="#333" stroke-width="1.1"/><circle cx="5.9" cy="15.1" r="0.85" fill="#333"/></svg>
<div class="a" style="left:1285px;top:842px;width:630px;height:4px;background:#b4b4b4"></div>
<div class="a" style="left:1280px;top:924px;width:640px;height:35px;background:#939393"></div>
<div class="t" style="left:1285.3px;top:933.29px;font-size:18.2px;color:#fff;font-weight:normal;">Overview set values, actual values</div>
<div class="a" style="left:1870px;top:924px;width:50px;height:35px;background:#0078d7"></div>
<svg class="a" style="left:1880px;top:930px;" width="30" height="24" viewBox="0 0 30 24"><path d="M8 20 L13.5 14.5 M9.5 13.8 H14.2 V18.5 M22.5 6 L17 11.5 M16.3 7 V11.7 H21" fill="none" stroke="#fff" stroke-width="1.3"/></svg>
<div class="a" style="left:1280px;top:959px;width:640px;height:87px;background:#000"></div>
<div class="a" style="left:1283px;top:962px;width:310px;height:59px;background:#fff"></div>
<div class="a" style="left:1597px;top:962px;width:310px;height:59px;background:#fff"></div>
<div class="t" style="left:1286.5px;top:968.52px;font-size:14.5px;color:#111;font-weight:normal;">Test voltage</div>
<div class="t" style="left:1289px;top:1004.78px;font-size:14.2px;color:#111;font-weight:normal;">1520 V...2280 V</div>
<div class="t" style="left:1449.5px;top:994.62px;font-size:23.6px;color:#111;font-weight:normal;">1982.8</div>
<div class="t" style="left:1579px;top:1004.52px;font-size:14.5px;color:#111;font-weight:normal;">V</div>
<div class="t" style="left:1600.3px;top:968.52px;font-size:14.5px;color:#111;font-weight:normal;">PD Level</div>
<div class="t" style="left:1603.4px;top:1004.52px;font-size:14.5px;color:#111;font-weight:normal;">≤ 15 mV</div>
<div class="t" style="left:1763.5px;top:994.28px;font-size:24px;color:#111;font-weight:normal;">115</div>
<div class="t" style="left:1880.5px;top:1004.52px;font-size:14.5px;color:#111;font-weight:normal;">mV</div>
<svg class="a" style="left:1893px;top:976px;" width="27" height="54" viewBox="0 0 27 54"><path d="M2.5 5.2 L6.6 1 H27 V53.5 L3.9 39.6 L2.5 37.8 Z" fill="#fff" stroke="#d8dde6" stroke-width="0.8"/><rect x="8.3" y="9" width="15.7" height="16" rx="3" fill="#0e1a5c"/><circle cx="16.1" cy="17" r="5.9" fill="#fff"/><path d="M12 17 H20.2" stroke="#0e1a5c" stroke-width="1.4"/><path d="M11.3 17 L13.8 15 V19 Z M20.9 17 L18.4 15 V19 Z" fill="#0e1a5c"/></svg>
<div class="a" style="left:1281px;top:1034.2px;width:600px;height:1.8px;background:#a8a8a8"></div>
<div class="a" style="left:1881px;top:1029px;width:7px;height:13px;background:#444;border:1px solid #eee;box-sizing:border-box"></div>
<div class="t" style="left:1897px;top:1029.06px;font-size:11.5px;color:#fff;font-weight:normal;">150</div>
<svg class="a" style="left:0;top:282px" width="1277" height="764" viewBox="0 282 1277 764">
<rect x="0" y="282" width="1277" height="764" fill="#000"/>
<rect x="72" y="971.9" width="975" height="1.3" fill="#9a9a9a"/>
<rect x="72" y="860.0" width="975" height="1.3" fill="#8c8c8c"/>
<rect x="72" y="748.1" width="975" height="1.3" fill="#8c8c8c"/>
<rect x="72" y="636.2" width="975" height="1.3" fill="#8c8c8c"/>
<rect x="72" y="524.3" width="975" height="1.3" fill="#8c8c8c"/>
<rect x="72" y="412.4" width="975" height="1.3" fill="#8c8c8c"/>
<line x1="81" y1="889" x2="1040" y2="889" stroke="#7a9a20" stroke-width="1.2" stroke-dasharray="2 2.2"/>
<rect x="83.52" y="931.1" width="3.3" height="41.4" fill="#ff3333"/>
<rect x="88.29" y="932.1" width="3.3" height="40.4" fill="#ff3333"/>
<rect x="93.06" y="935.2" width="3.3" height="37.3" fill="#ff3333"/>
<rect x="97.83" y="931.1" width="3.3" height="41.4" fill="#ff3333"/>
<rect x="102.60" y="930.1" width="3.3" height="42.4" fill="#ff3333"/>
<rect x="107.37" y="938.1" width="3.3" height="34.4" fill="#ff3333"/>
<rect x="112.14" y="933.1" width="3.3" height="39.4" fill="#ff3333"/>
<rect x="116.91" y="929.1" width="3.3" height="43.4" fill="#ff3333"/>
<rect x="121.68" y="937.1" width="3.3" height="35.4" fill="#ff3333"/>
<rect x="126.45" y="937.1" width="3.3" height="35.4" fill="#ff3333"/>
<rect x="131.22" y="935.2" width="3.3" height="37.3" fill="#ff3333"/>
<rect x="135.99" y="929.1" width="3.3" height="43.4" fill="#ff3333"/>
<rect x="140.76" y="933.1" width="3.3" height="39.4" fill="#ff3333"/>
<rect x="145.53" y="931.1" width="3.3" height="41.4" fill="#ff3333"/>
<rect x="150.30" y="934.2" width="3.3" height="38.3" fill="#ff3333"/>
<rect x="155.07" y="931.1" width="3.3" height="41.4" fill="#ff3333"/>
<rect x="159.84" y="932.1" width="3.3" height="40.4" fill="#ff3333"/>
<rect x="164.61" y="932.1" width="3.3" height="40.4" fill="#ff3333"/>
<rect x="169.38" y="935.2" width="3.3" height="37.3" fill="#ff3333"/>
<rect x="174.15" y="931.1" width="3.3" height="41.4" fill="#ff3333"/>
<rect x="178.92" y="932.1" width="3.3" height="40.4" fill="#ff3333"/>
<rect x="183.69" y="931.1" width="3.3" height="41.4" fill="#ff3333"/>
<rect x="188.46" y="935.2" width="3.3" height="37.3" fill="#ff3333"/>
<rect x="193.23" y="928.2" width="3.3" height="44.3" fill="#ff3333"/>
<rect x="198.00" y="923.0" width="3.3" height="49.5" fill="#ff3333"/>
<rect x="202.77" y="936.0" width="3.3" height="36.5" fill="#ff3333"/>
<rect x="207.54" y="934.2" width="3.3" height="38.3" fill="#ff3333"/>
<rect x="212.31" y="932.1" width="3.3" height="40.4" fill="#ff3333"/>
<rect x="217.08" y="924.0" width="3.3" height="48.5" fill="#ff3333"/>
<rect x="221.85" y="933.1" width="3.3" height="39.4" fill="#ff3333"/>
<rect x="226.62" y="920.1" width="3.3" height="52.4" fill="#ff3333"/>
<rect x="231.39" y="928.2" width="3.3" height="44.3" fill="#ff3333"/>
<rect x="236.16" y="931.1" width="3.3" height="41.4" fill="#ff3333"/>
<rect x="240.93" y="931.1" width="3.3" height="41.4" fill="#ff3333"/>
<rect x="245.70" y="933.1" width="3.3" height="39.4" fill="#ff3333"/>
<rect x="250.47" y="931.1" width="3.3" height="41.4" fill="#ff3333"/>
<rect x="255.24" y="928.2" width="3.3" height="44.3" fill="#ff3333"/>
<rect x="260.01" y="932.1" width="3.3" height="40.4" fill="#ff3333"/>
<rect x="264.78" y="938.1" width="3.3" height="34.4" fill="#ff3333"/>
<rect x="269.55" y="921.1" width="3.3" height="51.4" fill="#ff3333"/>
<rect x="274.32" y="928.2" width="3.3" height="44.3" fill="#ff3333"/>
<rect x="279.09" y="924.0" width="3.3" height="48.5" fill="#ff3333"/>
<rect x="283.86" y="918.1" width="3.3" height="54.4" fill="#ff3333"/>
<rect x="288.63" y="931.1" width="3.3" height="41.4" fill="#ff3333"/>
<rect x="293.40" y="934.2" width="3.3" height="38.3" fill="#ff3333"/>
<rect x="298.17" y="932.1" width="3.3" height="40.4" fill="#ff3333"/>
<rect x="302.94" y="927.2" width="3.3" height="45.3" fill="#ff3333"/>
<rect x="307.71" y="927.2" width="3.3" height="45.3" fill="#ff3333"/>
<rect x="312.48" y="933.1" width="3.3" height="39.4" fill="#ff3333"/>
<rect x="317.25" y="935.2" width="3.3" height="37.3" fill="#ff3333"/>
<rect x="322.02" y="929.1" width="3.3" height="43.4" fill="#ff3333"/>
<rect x="326.79" y="931.1" width="3.3" height="41.4" fill="#ff3333"/>
<rect x="331.56" y="928.2" width="3.3" height="44.3" fill="#ff3333"/>
<rect x="336.33" y="934.2" width="3.3" height="38.3" fill="#ff3333"/>
<rect x="341.10" y="928.2" width="3.3" height="44.3" fill="#ff3333"/>
<rect x="345.87" y="936.0" width="3.3" height="36.5" fill="#ff3333"/>
<rect x="350.64" y="926.1" width="3.3" height="46.4" fill="#ff3333"/>
<rect x="355.41" y="927.2" width="3.3" height="45.3" fill="#ff3333"/>
<rect x="360.18" y="931.1" width="3.3" height="41.4" fill="#ff3333"/>
<rect x="364.95" y="933.1" width="3.3" height="39.4" fill="#ff3333"/>
<rect x="369.72" y="927.2" width="3.3" height="45.3" fill="#ff3333"/>
<rect x="374.49" y="931.1" width="3.3" height="41.4" fill="#ff3333"/>
<rect x="379.26" y="931.1" width="3.3" height="41.4" fill="#ff3333"/>
<rect x="384.03" y="933.1" width="3.3" height="39.4" fill="#ff3333"/>
<rect x="388.80" y="931.1" width="3.3" height="41.4" fill="#ff3333"/>
<rect x="393.57" y="931.1" width="3.3" height="41.4" fill="#ff3333"/>
<rect x="398.34" y="924.0" width="3.3" height="48.5" fill="#ff3333"/>
<rect x="403.11" y="933.1" width="3.3" height="39.4" fill="#ff3333"/>
<rect x="407.88" y="924.0" width="3.3" height="48.5" fill="#ff3333"/>
<rect x="412.65" y="934.2" width="3.3" height="38.3" fill="#ff3333"/>
<rect x="417.42" y="931.1" width="3.3" height="41.4" fill="#ff3333"/>
<rect x="422.19" y="937.1" width="3.3" height="35.4" fill="#ff3333"/>
<rect x="426.96" y="925.1" width="3.3" height="47.4" fill="#ff3333"/>
<rect x="431.73" y="931.1" width="3.3" height="41.4" fill="#ff3333"/>
<rect x="436.50" y="920.1" width="3.3" height="52.4" fill="#ff3333"/>
<rect x="441.27" y="931.1" width="3.3" height="41.4" fill="#ff3333"/>
<rect x="446.04" y="939.2" width="3.3" height="33.3" fill="#ff3333"/>
<rect x="450.81" y="930.1" width="3.3" height="42.4" fill="#ff3333"/>
<rect x="455.58" y="929.1" width="3.3" height="43.4" fill="#ff3333"/>
<rect x="460.35" y="921.1" width="3.3" height="51.4" fill="#ff3333"/>
<rect x="465.12" y="934.2" width="3.3" height="38.3" fill="#ff3333"/>
<rect x="469.89" y="927.2" width="3.3" height="45.3" fill="#ff3333"/>
<rect x="474.66" y="931.1" width="3.3" height="41.4" fill="#ff3333"/>
<rect x="479.43" y="931.1" width="3.3" height="41.4" fill="#ff3333"/>
<rect x="484.20" y="935.2" width="3.3" height="37.3" fill="#ff3333"/>
<rect x="488.97" y="918.1" width="3.3" height="54.4" fill="#ff3333"/>
<rect x="493.74" y="929.1" width="3.3" height="43.4" fill="#ff3333"/>
<rect x="498.51" y="934.2" width="3.3" height="38.3" fill="#ff3333"/>
<rect x="503.28" y="928.2" width="3.3" height="44.3" fill="#ff3333"/>
<rect x="508.05" y="934.2" width="3.3" height="38.3" fill="#ff3333"/>
<rect x="512.82" y="931.1" width="3.3" height="41.4" fill="#ff3333"/>
<rect x="517.59" y="933.1" width="3.3" height="39.4" fill="#ff3333"/>
<rect x="522.36" y="934.2" width="3.3" height="38.3" fill="#ff3333"/>
<rect x="527.13" y="931.1" width="3.3" height="41.4" fill="#ff3333"/>
<rect x="531.90" y="932.1" width="3.3" height="40.4" fill="#ff3333"/>
<rect x="536.67" y="932.1" width="3.3" height="40.4" fill="#ff3333"/>
<rect x="541.44" y="933.1" width="3.3" height="39.4" fill="#ff3333"/>
<rect x="546.21" y="934.2" width="3.3" height="38.3" fill="#ff3333"/>
<rect x="550.98" y="936.0" width="3.3" height="36.5" fill="#ff3333"/>
<rect x="555.75" y="930.1" width="3.3" height="42.4" fill="#ff3333"/>
<rect x="560.52" y="928.2" width="3.3" height="44.3" fill="#ff3333"/>
<rect x="565.29" y="926.1" width="3.3" height="46.4" fill="#ff3333"/>
<rect x="570.06" y="934.2" width="3.3" height="38.3" fill="#ff3333"/>
<rect x="574.83" y="932.1" width="3.3" height="40.4" fill="#ff3333"/>
<rect x="579.60" y="937.1" width="3.3" height="35.4" fill="#ff3333"/>
<rect x="584.37" y="932.1" width="3.3" height="40.4" fill="#ff3333"/>
<rect x="589.14" y="934.2" width="3.3" height="38.3" fill="#ff3333"/>
<rect x="593.91" y="929.1" width="3.3" height="43.4" fill="#ff3333"/>
<rect x="598.68" y="923.0" width="3.3" height="49.5" fill="#ff3333"/>
<rect x="603.45" y="931.1" width="3.3" height="41.4" fill="#ff3333"/>
<rect x="608.22" y="932.1" width="3.3" height="40.4" fill="#ff3333"/>
<rect x="612.99" y="930.1" width="3.3" height="42.4" fill="#ff3333"/>
<rect x="617.76" y="931.1" width="3.3" height="41.4" fill="#ff3333"/>
<rect x="622.53" y="925.1" width="3.3" height="47.4" fill="#ff3333"/>
<rect x="627.30" y="932.1" width="3.3" height="40.4" fill="#ff3333"/>
<rect x="632.07" y="934.2" width="3.3" height="38.3" fill="#ff3333"/>
<rect x="636.84" y="926.1" width="3.3" height="46.4" fill="#ff3333"/>
<rect x="641.61" y="931.1" width="3.3" height="41.4" fill="#ff3333"/>
<rect x="646.38" y="925.1" width="3.3" height="47.4" fill="#ff3333"/>
<rect x="651.15" y="934.2" width="3.3" height="38.3" fill="#ff3333"/>
<rect x="655.92" y="935.2" width="3.3" height="37.3" fill="#ff3333"/>
<rect x="660.69" y="932.1" width="3.3" height="40.4" fill="#ff3333"/>
<rect x="665.46" y="932.1" width="3.3" height="40.4" fill="#ff3333"/>
<rect x="670.23" y="923.9" width="3.3" height="48.6" fill="#ff3333"/>
<rect x="675.00" y="934.1" width="3.3" height="38.4" fill="#ff3333"/>
<rect x="679.77" y="927.2" width="3.3" height="45.3" fill="#ff3333"/>
<rect x="684.54" y="929.1" width="3.3" height="43.4" fill="#ff3333"/>
<rect x="689.31" y="926.2" width="3.3" height="46.3" fill="#ff3333"/>
<rect x="694.08" y="936.1" width="3.3" height="36.4" fill="#ff3333"/>
<rect x="698.85" y="929.1" width="3.3" height="43.4" fill="#ff3333"/>
<rect x="703.62" y="934.1" width="3.3" height="38.4" fill="#ff3333"/>
<rect x="708.39" y="927.2" width="3.3" height="45.3" fill="#ff3333"/>
<rect x="713.16" y="937.1" width="3.3" height="35.4" fill="#ff3333"/>
<rect x="717.93" y="935.1" width="3.3" height="37.4" fill="#ff3333"/>
<rect x="722.70" y="933.1" width="3.3" height="39.4" fill="#ff3333"/>
<rect x="727.47" y="924.1" width="3.3" height="48.4" fill="#ff3333"/>
<rect x="732.24" y="934.1" width="3.3" height="38.4" fill="#ff3333"/>
<rect x="737.01" y="931.1" width="3.3" height="41.4" fill="#ff3333"/>
<rect x="741.78" y="931.1" width="3.3" height="41.4" fill="#ff3333"/>
<rect x="746.55" y="929.1" width="3.3" height="43.4" fill="#ff3333"/>
<rect x="751.22" y="520.0" width="3.5" height="452.5" fill="#ff0000"/>
<rect x="755.99" y="652.0" width="3.5" height="320.5" fill="#ff0000"/>
<rect x="760.76" y="533.0" width="3.5" height="439.5" fill="#ff0000"/>
<rect x="765.53" y="357.0" width="3.5" height="615.5" fill="#ff0000"/>
<rect x="770.30" y="540.0" width="3.5" height="432.5" fill="#ff0000"/>
<rect x="775.07" y="357.0" width="3.5" height="615.5" fill="#ff0000"/>
<rect x="779.84" y="714.0" width="3.5" height="258.5" fill="#ff0000"/>
<rect x="784.61" y="365.0" width="3.5" height="607.5" fill="#ff0000"/>
<rect x="789.38" y="469.0" width="3.5" height="503.5" fill="#ff0000"/>
<rect x="794.15" y="357.0" width="3.5" height="615.5" fill="#ff0000"/>
<rect x="79.6" y="357" width="1.4" height="623" fill="#fff"/>
<rect x="1039.8" y="357" width="1.4" height="616" fill="#fff"/>
<rect x="79.7" y="972" width="1.4" height="8" fill="#fff"/>
<text x="84.8" y="999.7" font-size="15" fill="#fff" text-anchor="middle">0</text>
<rect x="175.1" y="972" width="1.4" height="8" fill="#fff"/>
<text x="175.8" y="999.7" font-size="15" fill="#fff" text-anchor="middle">20</text>
<rect x="270.5" y="972" width="1.4" height="8" fill="#fff"/>
<text x="271.2" y="999.7" font-size="15" fill="#fff" text-anchor="middle">40</text>
<rect x="365.9" y="972" width="1.4" height="8" fill="#fff"/>
<text x="366.6" y="999.7" font-size="15" fill="#fff" text-anchor="middle">60</text>
<rect x="461.3" y="972" width="1.4" height="8" fill="#fff"/>
<text x="462.0" y="999.7" font-size="15" fill="#fff" text-anchor="middle">80</text>
<rect x="556.7" y="972" width="1.4" height="8" fill="#fff"/>
<text x="557.4" y="999.7" font-size="15" fill="#fff" text-anchor="middle">100</text>
<rect x="652.1" y="972" width="1.4" height="8" fill="#fff"/>
<text x="652.8" y="999.7" font-size="15" fill="#fff" text-anchor="middle">120</text>
<rect x="747.5" y="972" width="1.4" height="8" fill="#fff"/>
<text x="748.2" y="999.7" font-size="15" fill="#fff" text-anchor="middle">140</text>
<rect x="842.9" y="972" width="1.4" height="8" fill="#fff"/>
<text x="843.6" y="999.7" font-size="15" fill="#fff" text-anchor="middle">160</text>
<rect x="938.3" y="972" width="1.4" height="8" fill="#fff"/>
<text x="939.0" y="999.7" font-size="15" fill="#fff" text-anchor="middle">180</text>
<rect x="1033.7" y="972" width="1.4" height="8" fill="#fff"/>
<text x="1027.8" y="999.7" font-size="15" fill="#fff" text-anchor="middle">200</text>
<circle cx="85.17" cy="855.4" r="3.45" fill="#add8e6"/>
<circle cx="89.94" cy="859.8" r="3.45" fill="#add8e6"/>
<circle cx="94.71" cy="857.0" r="3.45" fill="#add8e6"/>
<circle cx="99.48" cy="858.5" r="3.45" fill="#add8e6"/>
<circle cx="104.25" cy="860.1" r="3.45" fill="#add8e6"/>
<circle cx="109.02" cy="857.0" r="3.45" fill="#add8e6"/>
<circle cx="113.79" cy="857.0" r="3.45" fill="#add8e6"/>
<circle cx="118.56" cy="859.4" r="3.45" fill="#add8e6"/>
<circle cx="123.33" cy="857.5" r="3.45" fill="#add8e6"/>
<circle cx="128.10" cy="854.9" r="3.45" fill="#add8e6"/>
<circle cx="132.87" cy="831.5" r="3.45" fill="#add8e6"/>
<circle cx="137.64" cy="836.7" r="3.45" fill="#add8e6"/>
<circle cx="142.41" cy="832.0" r="3.45" fill="#add8e6"/>
<circle cx="147.18" cy="833.5" r="3.45" fill="#add8e6"/>
<circle cx="151.95" cy="837.2" r="3.45" fill="#add8e6"/>
<circle cx="156.72" cy="832.0" r="3.45" fill="#add8e6"/>
<circle cx="161.49" cy="833.5" r="3.45" fill="#add8e6"/>
<circle cx="166.26" cy="836.1" r="3.45" fill="#add8e6"/>
<circle cx="171.03" cy="840.3" r="3.45" fill="#add8e6"/>
<circle cx="175.80" cy="836.1" r="3.45" fill="#add8e6"/>
<circle cx="180.57" cy="811.1" r="3.45" fill="#add8e6"/>
<circle cx="185.34" cy="816.9" r="3.45" fill="#add8e6"/>
<circle cx="190.11" cy="812.7" r="3.45" fill="#add8e6"/>
<circle cx="194.88" cy="811.7" r="3.45" fill="#add8e6"/>
<circle cx="199.65" cy="813.8" r="3.45" fill="#add8e6"/>
<circle cx="204.42" cy="814.8" r="3.45" fill="#add8e6"/>
<circle cx="209.19" cy="813.8" r="3.45" fill="#add8e6"/>
<circle cx="213.96" cy="809.1" r="3.45" fill="#add8e6"/>
<circle cx="218.73" cy="809.1" r="3.45" fill="#add8e6"/>
<circle cx="223.50" cy="813.8" r="3.45" fill="#add8e6"/>
<circle cx="228.27" cy="789.8" r="3.45" fill="#add8e6"/>
<circle cx="233.04" cy="785.1" r="3.45" fill="#add8e6"/>
<circle cx="237.81" cy="791.4" r="3.45" fill="#add8e6"/>
<circle cx="242.58" cy="789.8" r="3.45" fill="#add8e6"/>
<circle cx="247.35" cy="791.9" r="3.45" fill="#add8e6"/>
<circle cx="252.12" cy="788.8" r="3.45" fill="#add8e6"/>
<circle cx="256.89" cy="786.7" r="3.45" fill="#add8e6"/>
<circle cx="261.66" cy="791.4" r="3.45" fill="#add8e6"/>
<circle cx="266.43" cy="789.8" r="3.45" fill="#add8e6"/>
<circle cx="271.20" cy="791.4" r="3.45" fill="#add8e6"/>
<circle cx="275.97" cy="766.7" r="3.45" fill="#add8e6"/>
<circle cx="280.74" cy="767.2" r="3.45" fill="#add8e6"/>
<circle cx="285.51" cy="770.0" r="3.45" fill="#add8e6"/>
<circle cx="290.28" cy="770.0" r="3.45" fill="#add8e6"/>
<circle cx="295.05" cy="766.1" r="3.45" fill="#add8e6"/>
<circle cx="299.82" cy="761.7" r="3.45" fill="#add8e6"/>
<circle cx="304.59" cy="763.3" r="3.45" fill="#add8e6"/>
<circle cx="309.36" cy="768.9" r="3.45" fill="#add8e6"/>
<circle cx="314.13" cy="766.1" r="3.45" fill="#add8e6"/>
<circle cx="318.90" cy="770.0" r="3.45" fill="#add8e6"/>
<circle cx="323.67" cy="746.7" r="3.45" fill="#add8e6"/>
<circle cx="328.44" cy="748.9" r="3.45" fill="#add8e6"/>
<circle cx="333.21" cy="744.4" r="3.45" fill="#add8e6"/>
<circle cx="337.98" cy="742.8" r="3.45" fill="#add8e6"/>
<circle cx="342.75" cy="740.0" r="3.45" fill="#add8e6"/>
<circle cx="347.52" cy="747.8" r="3.45" fill="#add8e6"/>
<circle cx="352.29" cy="742.8" r="3.45" fill="#add8e6"/>
<circle cx="357.06" cy="740.0" r="3.45" fill="#add8e6"/>
<circle cx="361.83" cy="743.3" r="3.45" fill="#add8e6"/>
<circle cx="366.60" cy="739.4" r="3.45" fill="#add8e6"/>
<circle cx="371.37" cy="721.7" r="3.45" fill="#add8e6"/>
<circle cx="376.14" cy="724.4" r="3.45" fill="#add8e6"/>
<circle cx="380.91" cy="718.3" r="3.45" fill="#add8e6"/>
<circle cx="385.68" cy="723.9" r="3.45" fill="#add8e6"/>
<circle cx="390.45" cy="723.9" r="3.45" fill="#add8e6"/>
<circle cx="395.22" cy="721.1" r="3.45" fill="#add8e6"/>
<circle cx="399.99" cy="723.9" r="3.45" fill="#add8e6"/>
<circle cx="404.76" cy="720.6" r="3.45" fill="#add8e6"/>
<circle cx="409.53" cy="722.8" r="3.45" fill="#add8e6"/>
<circle cx="414.30" cy="723.9" r="3.45" fill="#add8e6"/>
<circle cx="419.07" cy="696.7" r="3.45" fill="#add8e6"/>
<circle cx="423.84" cy="698.9" r="3.45" fill="#add8e6"/>
<circle cx="428.61" cy="701.1" r="3.45" fill="#add8e6"/>
<circle cx="433.38" cy="700.0" r="3.45" fill="#add8e6"/>
<circle cx="438.15" cy="697.8" r="3.45" fill="#add8e6"/>
<circle cx="442.92" cy="693.3" r="3.45" fill="#add8e6"/>
<circle cx="447.69" cy="695.6" r="3.45" fill="#add8e6"/>
<circle cx="452.46" cy="700.0" r="3.45" fill="#add8e6"/>
<circle cx="457.23" cy="693.3" r="3.45" fill="#add8e6"/>
<circle cx="462.00" cy="698.9" r="3.45" fill="#add8e6"/>
<circle cx="466.77" cy="671.7" r="3.45" fill="#add8e6"/>
<circle cx="471.54" cy="669.4" r="3.45" fill="#add8e6"/>
<circle cx="476.31" cy="677.8" r="3.45" fill="#add8e6"/>
<circle cx="481.08" cy="673.3" r="3.45" fill="#add8e6"/>
<circle cx="485.85" cy="666.7" r="3.45" fill="#add8e6"/>
<circle cx="490.62" cy="668.3" r="3.45" fill="#add8e6"/>
<circle cx="495.39" cy="672.2" r="3.45" fill="#add8e6"/>
<circle cx="500.16" cy="675.6" r="3.45" fill="#add8e6"/>
<circle cx="504.93" cy="667.8" r="3.45" fill="#add8e6"/>
<circle cx="509.70" cy="670.6" r="3.45" fill="#add8e6"/>
<circle cx="514.47" cy="652.8" r="3.45" fill="#add8e6"/>
<circle cx="519.24" cy="648.9" r="3.45" fill="#add8e6"/>
<circle cx="524.01" cy="645.0" r="3.45" fill="#add8e6"/>
<circle cx="528.78" cy="646.7" r="3.45" fill="#add8e6"/>
<circle cx="533.55" cy="651.7" r="3.45" fill="#add8e6"/>
<circle cx="538.32" cy="653.3" r="3.45" fill="#add8e6"/>
<circle cx="543.09" cy="652.8" r="3.45" fill="#add8e6"/>
<circle cx="547.86" cy="648.9" r="3.45" fill="#add8e6"/>
<circle cx="552.63" cy="651.7" r="3.45" fill="#add8e6"/>
<circle cx="557.40" cy="651.7" r="3.45" fill="#add8e6"/>
<circle cx="562.17" cy="627.8" r="3.45" fill="#add8e6"/>
<circle cx="566.94" cy="623.3" r="3.45" fill="#add8e6"/>
<circle cx="571.71" cy="629.4" r="3.45" fill="#add8e6"/>
<circle cx="576.48" cy="622.2" r="3.45" fill="#add8e6"/>
<circle cx="581.25" cy="629.4" r="3.45" fill="#add8e6"/>
<circle cx="586.02" cy="631.1" r="3.45" fill="#add8e6"/>
<circle cx="590.79" cy="627.2" r="3.45" fill="#add8e6"/>
<circle cx="595.56" cy="628.3" r="3.45" fill="#add8e6"/>
<circle cx="600.33" cy="630.0" r="3.45" fill="#add8e6"/>
<circle cx="605.10" cy="625.6" r="3.45" fill="#add8e6"/>
<circle cx="609.87" cy="600.6" r="3.45" fill="#add8e6"/>
<circle cx="614.64" cy="597.8" r="3.45" fill="#add8e6"/>
<circle cx="619.41" cy="602.8" r="3.45" fill="#add8e6"/>
<circle cx="624.18" cy="602.8" r="3.45" fill="#add8e6"/>
<circle cx="628.95" cy="600.0" r="3.45" fill="#add8e6"/>
<circle cx="633.72" cy="600.0" r="3.45" fill="#add8e6"/>
<circle cx="638.49" cy="601.7" r="3.45" fill="#add8e6"/>
<circle cx="643.26" cy="604.4" r="3.45" fill="#add8e6"/>
<circle cx="648.03" cy="600.0" r="3.45" fill="#add8e6"/>
<circle cx="652.80" cy="605.6" r="3.45" fill="#add8e6"/>
<circle cx="657.57" cy="576.4" r="3.45" fill="#add8e6"/>
<circle cx="662.34" cy="577.8" r="3.45" fill="#add8e6"/>
<circle cx="667.11" cy="583.8" r="3.45" fill="#add8e6"/>
<circle cx="671.88" cy="580.6" r="3.45" fill="#add8e6"/>
<circle cx="676.65" cy="576.4" r="3.45" fill="#add8e6"/>
<circle cx="681.42" cy="582.9" r="3.45" fill="#add8e6"/>
<circle cx="686.19" cy="577.3" r="3.45" fill="#add8e6"/>
<circle cx="690.96" cy="582.9" r="3.45" fill="#add8e6"/>
<circle cx="695.73" cy="580.6" r="3.45" fill="#add8e6"/>
<circle cx="700.50" cy="579.6" r="3.45" fill="#add8e6"/>
<circle cx="705.27" cy="557.9" r="3.45" fill="#add8e6"/>
<circle cx="710.04" cy="553.7" r="3.45" fill="#add8e6"/>
<circle cx="714.81" cy="555.1" r="3.45" fill="#add8e6"/>
<circle cx="719.58" cy="559.3" r="3.45" fill="#add8e6"/>
<circle cx="724.35" cy="556.5" r="3.45" fill="#add8e6"/>
<circle cx="729.12" cy="552.8" r="3.45" fill="#add8e6"/>
<circle cx="733.89" cy="552.8" r="3.45" fill="#add8e6"/>
<circle cx="738.66" cy="556.0" r="3.45" fill="#add8e6"/>
<circle cx="743.43" cy="559.3" r="3.45" fill="#add8e6"/>
<circle cx="748.20" cy="555.1" r="3.45" fill="#add8e6"/>
<circle cx="752.97" cy="533.8" r="3.45" fill="#add8e6"/>
<circle cx="757.74" cy="533.8" r="3.45" fill="#add8e6"/>
<circle cx="762.51" cy="531.0" r="3.45" fill="#add8e6"/>
<circle cx="767.28" cy="536.6" r="3.45" fill="#add8e6"/>
<circle cx="772.05" cy="527.8" r="3.45" fill="#add8e6"/>
<circle cx="776.82" cy="533.8" r="3.45" fill="#add8e6"/>
<circle cx="781.59" cy="534.7" r="3.45" fill="#add8e6"/>
<circle cx="786.36" cy="532.4" r="3.45" fill="#add8e6"/>
<circle cx="791.13" cy="531.9" r="3.45" fill="#add8e6"/>
<circle cx="795.90" cy="528.7" r="3.45" fill="#add8e6"/>
</svg>
<div class="t" style="right:1851px;text-align:right;top:955.85px;font-size:14px;color:#a6d0de;font-weight:normal;">0.00 kV</div>
<div class="t" style="right:1851px;text-align:right;top:854.65px;font-size:14px;color:#a6d0de;font-weight:normal;">0.50 kV</div>
<div class="t" style="right:1851px;text-align:right;top:742.75px;font-size:14px;color:#a6d0de;font-weight:normal;">1.00 kV</div>
<div class="t" style="right:1851px;text-align:right;top:630.85px;font-size:14px;color:#a6d0de;font-weight:normal;">1.50 kV</div>
<div class="t" style="right:1851px;text-align:right;top:518.95px;font-size:14px;color:#a6d0de;font-weight:normal;">2.00 kV</div>
<div class="t" style="right:1851px;text-align:right;top:407.05px;font-size:14px;color:#a6d0de;font-weight:normal;">2.50 kV</div>
<div class="t" style="left:1051.4px;top:955.72px;font-size:14.5px;color:#ff1a1a;font-weight:normal;">0.00 mV</div>
<div class="t" style="left:1051.4px;top:854.02px;font-size:14.5px;color:#ff1a1a;font-weight:normal;">20.00 mV</div>
<div class="t" style="left:1051.4px;top:742.12px;font-size:14.5px;color:#ff1a1a;font-weight:normal;">40.00 mV</div>
<div class="t" style="left:1051.4px;top:630.22px;font-size:14.5px;color:#ff1a1a;font-weight:normal;">60.00 mV</div>
<div class="t" style="left:1051.4px;top:518.32px;font-size:14.5px;color:#ff1a1a;font-weight:normal;">80.00 mV</div>
<div class="t" style="left:1051.4px;top:406.42px;font-size:14.5px;color:#ff1a1a;font-weight:normal;">100.00 mV</div>
<div class="t" style="left:5.8px;top:345.15px;font-size:14px;color:#a8d4e4;font-weight:bold;">U</div>
<div class="t" style="left:1122.4px;top:344.65px;font-size:14px;color:#ff1a1a;font-weight:bold;">PD</div>
<div class="t" style="right:883px;text-align:right;top:868.57px;font-size:12.2px;color:#9ac32a;font-weight:normal;">Detection threshold 15 mV</div>
<div class="a" style="left:1148px;top:387px;width:115px;height:44px;background:#1b2730;border:1px solid #c8c8c8;box-sizing:border-box"></div>
<div class="a" style="left:1173.9px;top:396.3px;width:10px;height:10px;background:#9ec4d4;border-radius:50%"></div>
<div class="a" style="left:1158.6px;top:412px;width:40px;height:10.2px;background:#cc0000"></div>
<div class="t" style="left:1203.6px;top:395.92px;font-size:12.5px;color:#d8d8d8;font-weight:bold;">Surge</div>
<div class="t" style="left:1204px;top:412.01px;font-size:11.8px;color:#d8d8d8;font-weight:bold;">PD Level</div>
<div class="a" style="left:10px;top:285px;width:121px;height:45px;background:#3c3c3c"></div>
<div class="t" style="left:26.2px;top:301.59px;font-size:15.6px;color:#fff;font-weight:normal;">Oscilloscope</div>
<div class="a" style="left:137px;top:285px;width:95px;height:45px;background:#000;border:1px solid #1a1a1a;box-sizing:border-box"></div>
<div class="a" style="left:137px;top:324.5px;width:95px;height:5px;background:#0078d7"></div>
<div class="t" style="left:152.8px;top:301.59px;font-size:15.6px;color:#fff;font-weight:normal;">Bar chart</div>
</body></html>
